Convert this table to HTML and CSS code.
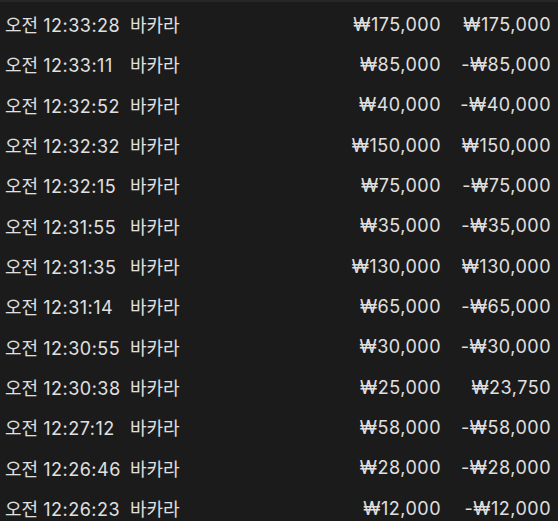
FILE: index.html
```html
<!DOCTYPE html>
<html lang="ko">
<head>
<meta charset="utf-8">
<link rel="stylesheet" href="styles.css">
</head>
<body>
<div class="frame">
  <div class="list">
    <div class="row"><span class="time">오전 <span class="num">12:33:28</span></span><span class="game">바카라</span><span class="amt">₩175,000</span><span class="res">₩175,000</span></div>
    <div class="row"><span class="time">오전 <span class="num">12:33:11</span></span><span class="game">바카라</span><span class="amt">₩85,000</span><span class="res">-₩85,000</span></div>
    <div class="row"><span class="time">오전 <span class="num">12:32:52</span></span><span class="game">바카라</span><span class="amt">₩40,000</span><span class="res">-₩40,000</span></div>
    <div class="row"><span class="time">오전 <span class="num">12:32:32</span></span><span class="game">바카라</span><span class="amt">₩150,000</span><span class="res">₩150,000</span></div>
    <div class="row"><span class="time">오전 <span class="num">12:32:15</span></span><span class="game">바카라</span><span class="amt">₩75,000</span><span class="res">-₩75,000</span></div>
    <div class="row"><span class="time">오전 <span class="num">12:31:55</span></span><span class="game">바카라</span><span class="amt">₩35,000</span><span class="res">-₩35,000</span></div>
    <div class="row"><span class="time">오전 <span class="num">12:31:35</span></span><span class="game">바카라</span><span class="amt">₩130,000</span><span class="res">₩130,000</span></div>
    <div class="row"><span class="time">오전 <span class="num">12:31:14</span></span><span class="game">바카라</span><span class="amt">₩65,000</span><span class="res">-₩65,000</span></div>
    <div class="row"><span class="time">오전 <span class="num">12:30:55</span></span><span class="game">바카라</span><span class="amt">₩30,000</span><span class="res">-₩30,000</span></div>
    <div class="row"><span class="time">오전 <span class="num">12:30:38</span></span><span class="game">바카라</span><span class="amt">₩25,000</span><span class="res">₩23,750</span></div>
    <div class="row"><span class="time">오전 <span class="num">12:27:12</span></span><span class="game">바카라</span><span class="amt">₩58,000</span><span class="res">-₩58,000</span></div>
    <div class="row"><span class="time">오전 <span class="num">12:26:46</span></span><span class="game">바카라</span><span class="amt">₩28,000</span><span class="res">-₩28,000</span></div>
    <div class="row"><span class="time">오전 <span class="num">12:26:23</span></span><span class="game">바카라</span><span class="amt">₩12,000</span><span class="res">-₩12,000</span></div>
  </div>
</div>
</body>
</html>
```
FILE: styles.css
```css
html, body {
  margin: 0;
  padding: 0;
  background: #ffffff;
}
.frame {
  height: 521px;
  overflow: hidden;
  background: #1b1b1b;
  border-top: 2px solid #262626;
  box-sizing: border-box;
}
.list {
  padding: 2px 7px 0 5px;
}
.row {
  display: grid;
  grid-template-columns: 125px 1fr auto 110px;
  align-items: center;
  height: 40.33px;
  font-family: Inter, "Noto Sans CJK KR", sans-serif;
  font-size: 18px;
  color: #e0e0e0;
  white-space: nowrap;
}
.num, .amt, .res {
  letter-spacing: 0.5px;
}
.amt, .res {
  text-align: right;
}
```
